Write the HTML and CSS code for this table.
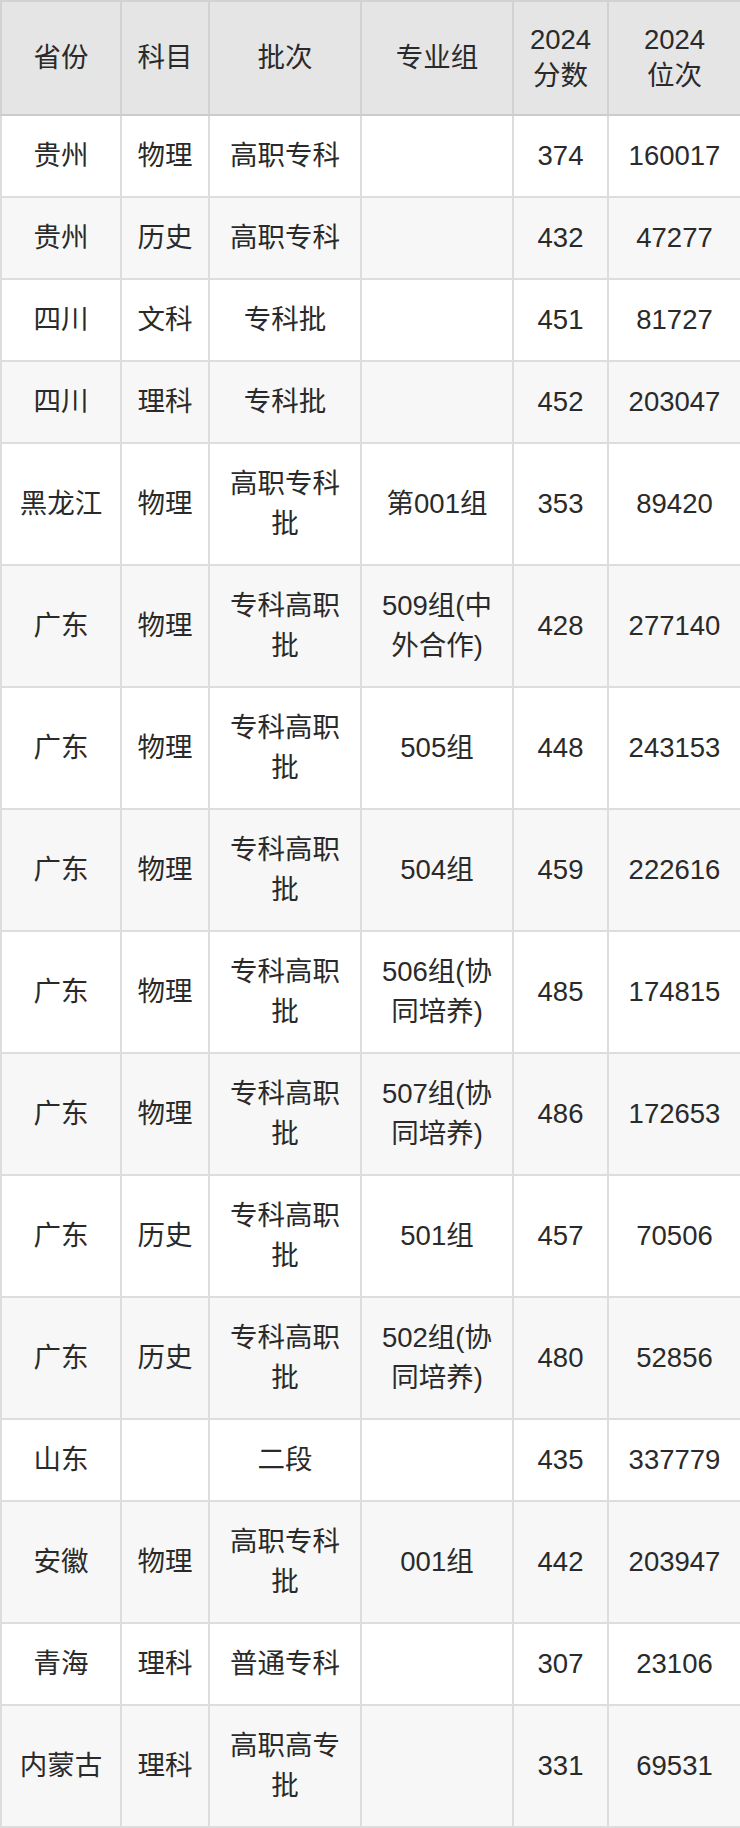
FILE: index.html
```html
<!DOCTYPE html>
<html lang="zh-CN">
<head>
<meta charset="utf-8">
<title>2024 分数位次</title>
<link rel="stylesheet" href="styles.css">
</head>
<body>
<table class="score-table">
  <colgroup>
    <col class="c-prov"><col class="c-subj"><col class="c-batch"><col class="c-group"><col class="c-score"><col class="c-rank">
  </colgroup>
  <thead>
    <tr><th>省份</th><th>科目</th><th>批次</th><th>专业组</th><th>2024<br>分数</th><th>2024<br>位次</th></tr>
  </thead>
  <tbody>
    <tr><td>贵州</td><td>物理</td><td>高职专科</td><td></td><td>374</td><td>160017</td></tr>
    <tr><td>贵州</td><td>历史</td><td>高职专科</td><td></td><td>432</td><td>47277</td></tr>
    <tr><td>四川</td><td>文科</td><td>专科批</td><td></td><td>451</td><td>81727</td></tr>
    <tr><td>四川</td><td>理科</td><td>专科批</td><td></td><td>452</td><td>203047</td></tr>
    <tr><td>黑龙江</td><td>物理</td><td>高职专科批</td><td>第001组</td><td>353</td><td>89420</td></tr>
    <tr><td>广东</td><td>物理</td><td>专科高职批</td><td>509组(中外合作)</td><td>428</td><td>277140</td></tr>
    <tr><td>广东</td><td>物理</td><td>专科高职批</td><td>505组</td><td>448</td><td>243153</td></tr>
    <tr><td>广东</td><td>物理</td><td>专科高职批</td><td>504组</td><td>459</td><td>222616</td></tr>
    <tr><td>广东</td><td>物理</td><td>专科高职批</td><td>506组(协同培养)</td><td>485</td><td>174815</td></tr>
    <tr><td>广东</td><td>物理</td><td>专科高职批</td><td>507组(协同培养)</td><td>486</td><td>172653</td></tr>
    <tr><td>广东</td><td>历史</td><td>专科高职批</td><td>501组</td><td>457</td><td>70506</td></tr>
    <tr><td>广东</td><td>历史</td><td>专科高职批</td><td>502组(协同培养)</td><td>480</td><td>52856</td></tr>
    <tr><td>山东</td><td></td><td>二段</td><td></td><td>435</td><td>337779</td></tr>
    <tr><td>安徽</td><td>物理</td><td>高职专科批</td><td>001组</td><td>442</td><td>203947</td></tr>
    <tr><td>青海</td><td>理科</td><td>普通专科</td><td></td><td>307</td><td>23106</td></tr>
    <tr><td>内蒙古</td><td>理科</td><td>高职高专批</td><td></td><td>331</td><td>69531</td></tr>
  </tbody>
</table>
</body>
</html>
```
FILE: styles.css
```css
html, body {
  margin: 0;
  padding: 0;
  background: #ffffff;
}

.score-table {
  width: 740px;
  border-collapse: collapse;
  table-layout: fixed;
  font-family: "Liberation Sans", "Noto Sans CJK SC", sans-serif;
  font-size: 27.5px;
  color: #2a2a2a;
}

.c-prov { width: 120px; }
.c-subj { width: 88px; }
.c-batch { width: 152px; }
.c-group { width: 152px; }
.c-score { width: 95px; }
.c-rank { width: 133px; }

.score-table th,
.score-table td {
  border: 2px solid #dddddd;
  padding: 20px 9px;
  text-align: center;
  vertical-align: middle;
  word-break: break-all;
}

.score-table th {
  background: #e5e5e5;
  font-weight: normal;
  line-height: 36px;
  border-color: #d2d2d2;
  border-bottom-color: #cccccc;
}

.score-table td {
  line-height: 40px;
}

.score-table tbody tr:nth-child(even) td {
  background: #f7f7f7;
}
```
